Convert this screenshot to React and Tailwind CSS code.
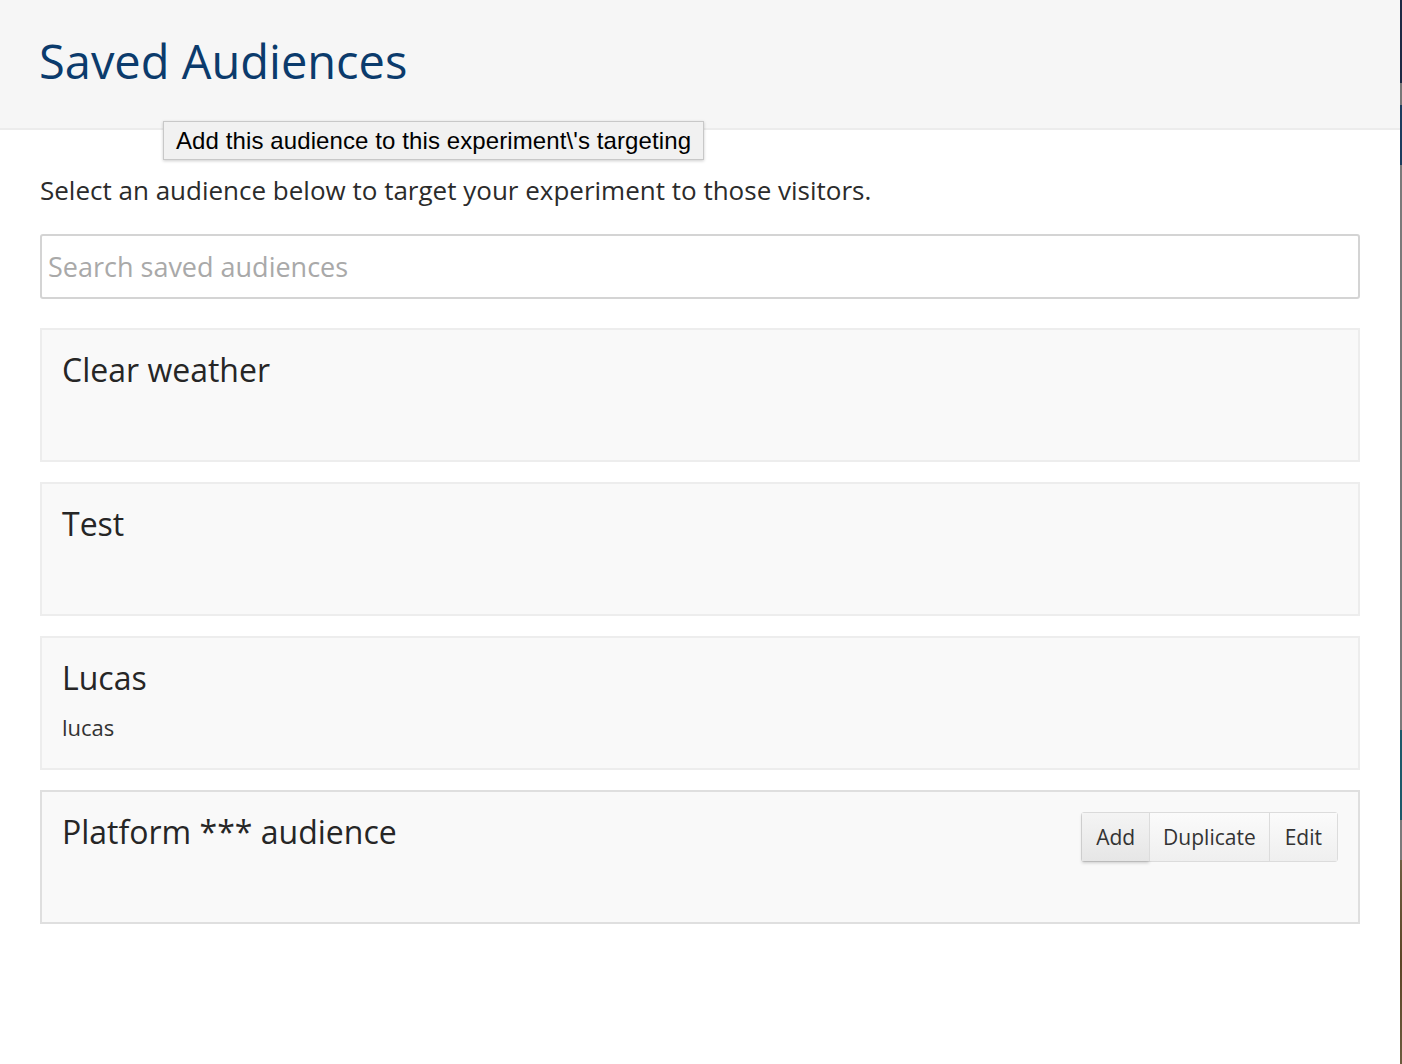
import React from "react";

const audiences = [
  { name: "Clear weather", desc: "" },
  { name: "Test", desc: "" },
  { name: "Lucas", desc: "lucas" },
  { name: "Platform *** audience", desc: "", hover: true },
];

const font = { fontFamily: "'Open Sans', Lato, sans-serif" };

const AudienceCard = ({ item }) => (
  <div
    className={`flex h-[134px] justify-between border-2 bg-[#f9f9f9] pl-[20px] pr-[20px] pt-[14px] ${
      item.hover ? "border-[#dfdfdf]" : "border-[#ededed]"
    }`}
  >
    <div>
      <h3 className="text-[32px] leading-[52px] text-[#262626]">{item.name}</h3>
      {item.desc && <p className="mt-[9px] text-[22px] leading-[28px] text-[#333]">{item.desc}</p>}
    </div>
    {item.hover && (
      <div className="mt-[6px] flex h-[50px] self-start rounded-[3px] border border-[#dcdcdc] pt-[2px] text-[21px] text-[#333]">
        <button className="-mt-[2px] bg-gradient-to-b from-[#f4f4f4] to-[#e6e6e6] px-[14px] pt-[2px] shadow-[0_2px_3px_rgba(0,0,0,0.18)]">Add</button>
        <button className="-mt-[2px] border-l border-[#dcdcdc] bg-gradient-to-b from-[#fbfbfb] to-[#efefef] px-[13px] pt-[2px]">Duplicate</button>
        <button className="-mt-[2px] border-l border-[#dcdcdc] bg-gradient-to-b from-[#fbfbfb] to-[#efefef] px-[15px] pt-[2px]">Edit</button>
      </div>
    )}
  </div>
);

const App = () => {
  return (
    <div className="flex h-[1064px] w-[1402px] bg-white" style={font}>
      <div className="relative flex-1">
        <header className="h-[130px] border-b-2 border-[#ececec] bg-[#f6f6f6] pl-[39px] pt-[29px]">
          <h1 className="text-[47px] leading-[64px] text-[#0b3b6c]">Saved Audiences</h1>
        </header>

        {/* tooltip */}
        <div
          className="absolute left-[163px] top-[121px] border border-[#c8c8c8] bg-[#f1f1f1] px-[12px] py-[3px] text-[24px] leading-[31px] tracking-[0.1px] text-black shadow-[0_1px_3px_rgba(0,0,0,0.2)]"
          style={{ fontFamily: "'Liberation Sans', Arial, sans-serif" }}
        >
          Add this audience to this experiment\'s targeting
        </div>

        <div className="px-[40px] pt-[43px]">
          <p className="text-[26px] leading-[34px] text-[#2b2b2b]">
            Select an audience below to target your experiment to those visitors.
          </p>
          <input
            className="mt-[27px] block h-[65px] w-full rounded-[3px] border-2 border-[#d4d4d4] px-[6px] text-[27px] placeholder-[#a9a9a9] outline-none"
            placeholder="Search saved audiences"
            style={font}
          />
          <div className="mt-[29px] flex flex-col gap-[20px]">
            {audiences.map((a) => (
              <AudienceCard key={a.name} item={a} />
            ))}
          </div>
        </div>
      </div>

      {/* edge of the window behind */}
      <div className="flex w-[2px] flex-col">
        <div className="h-[83px] bg-[#1c2a44]" />
        <div className="h-[22px] bg-[#777]" />
        <div className="h-[60px] bg-[#1b3d5e]" />
        <div className="h-[565px] bg-[#7a7a7a]" />
        <div className="h-[90px] bg-[#1d5a6a]" />
        <div className="h-[40px] bg-[#7a7a7a]" />
        <div className="flex-1 bg-gradient-to-b from-[#6e5f42] via-[#5c4526] to-[#6b5c3e]" />
      </div>
    </div>
  );
};

export default App;
